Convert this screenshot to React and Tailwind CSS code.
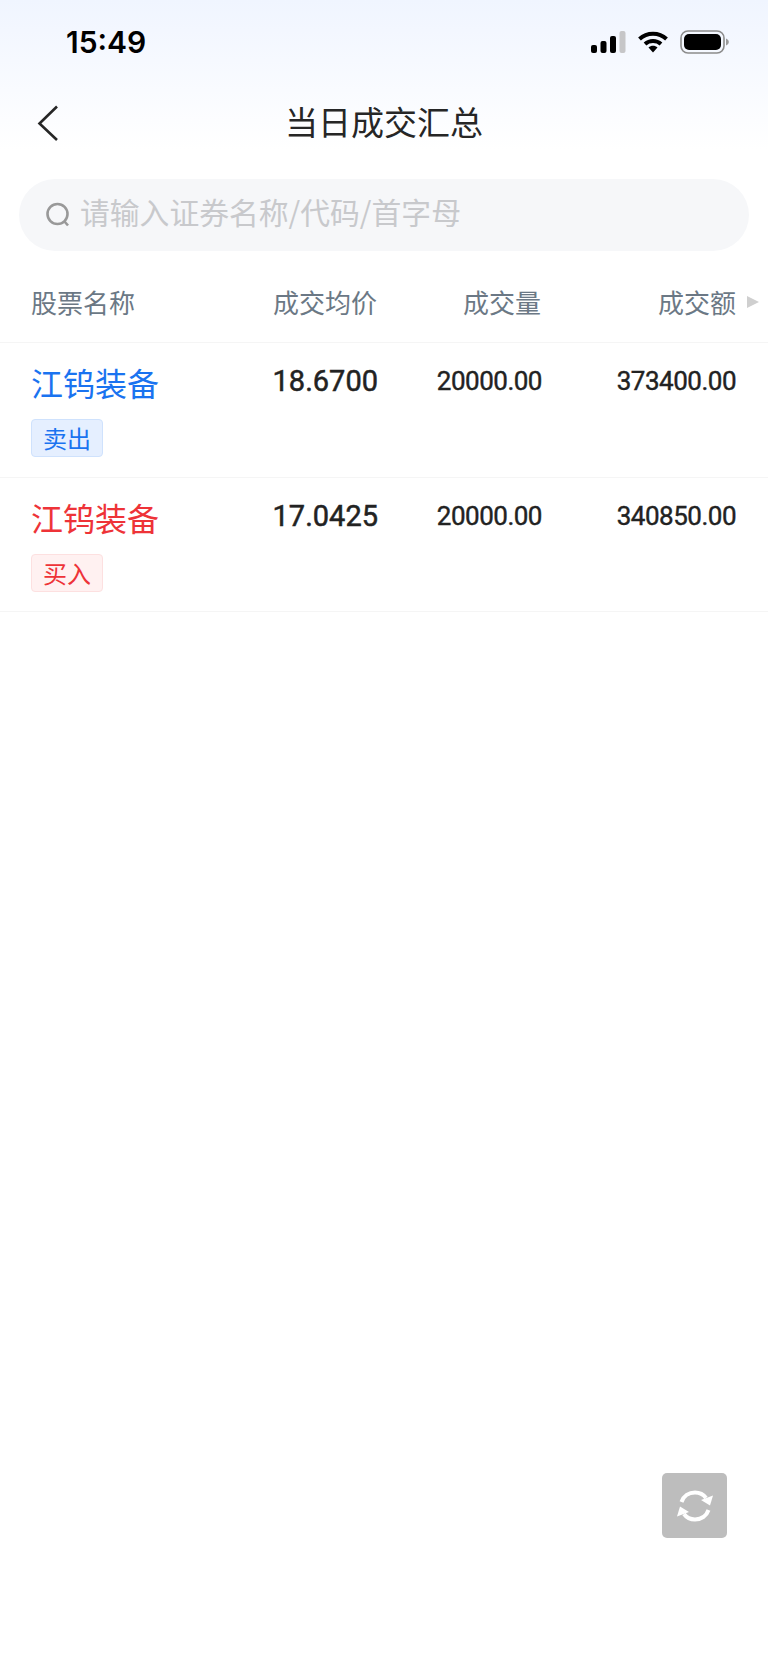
import React from "react";

const cjk = "font-['Noto_Sans_CJK_SC','Noto_Sans',sans-serif]";
const num = "font-['Roboto','Noto_Sans_CJK_SC',sans-serif]";

const rows = [
  { name: "江钨装备", side: "卖出", price: "18.6700", qty: "20000.00", amount: "373400.00", buy: false },
  { name: "江钨装备", side: "买入", price: "17.0425", qty: "20000.00", amount: "340850.00", buy: true },
];

function StatusBar() {
  return (
    <div className="h-[84px] flex items-center justify-between pl-[66px] pr-[39px]">
      <span className="font-['Inter',sans-serif] text-[30px] font-semibold text-black leading-none">15:49</span>
      <div className="flex items-center gap-[12px]">
        <svg width="35" height="22" viewBox="0 0 35 22">
          <rect x="0" y="14" width="6" height="8" rx="2" fill="#000" />
          <rect x="9.5" y="10" width="6" height="12" rx="2" fill="#000" />
          <rect x="19" y="5" width="6" height="17" rx="2" fill="#000" />
          <rect x="28.5" y="0" width="6" height="22" rx="2" fill="#c6c6c8" />
        </svg>
        <svg width="30" height="22" viewBox="0 0 30 22">
          <path d="M1.5 8C9 1 21 1 28.5 8" fill="none" stroke="#000" strokeWidth="4" />
          <path d="M7 13C11.5 9 18.5 9 23 13" fill="none" stroke="#000" strokeWidth="4" />
          <path d="M10.5 16.4C13 14.2 17 14.2 19.5 16.4L15 21.5Z" fill="#000" />
        </svg>
        <svg width="49" height="24" viewBox="0 0 49 24">
          <rect x="1" y="1" width="43" height="22" rx="7" fill="none" stroke="#8c8c8c" strokeWidth="1.6" />
          <rect x="4" y="4" width="37" height="16" rx="5" fill="#000" />
          <path d="M46 8.5C48 9.3 48.8 10.5 48.8 12S48 14.7 46 15.5Z" fill="#9a9a9a" />
        </svg>
      </div>
    </div>
  );
}

function TopBar() {
  return (
    <div className="relative h-[80px] flex items-center justify-center pb-[6px]">
      <svg className="absolute left-[36px] top-[20px]" width="24" height="38" viewBox="0 0 24 38">
        <path d="M21 2.5 3.5 19.5 21 36" fill="none" stroke="#262626" strokeWidth="2.6" />
      </svg>
      <h1 className={`${cjk} text-[33px] font-normal leading-none text-[#262626]`}>当日成交汇总</h1>
    </div>
  );
}

function SearchBox() {
  return (
    <div className="mx-[19px] mt-[15px] h-[72px] rounded-[36px] bg-[#f6f7f9] flex items-center pl-[26px]">
      <svg width="26" height="26" viewBox="0 0 26 26">
        <circle cx="12.5" cy="12" r="10" fill="none" stroke="#999999" strokeWidth="2.6" />
        <path d="M19.5 19.5 23 23.5" fill="none" stroke="#999999" strokeWidth="2.6" />
      </svg>
      <span className={`${cjk} ml-[9px] pb-[6px] text-[29.8px] leading-none text-[#c8c9cc]`}>请输入证券名称/代码/首字母</span>
    </div>
  );
}

function TableHeader() {
  return (
    <div className={`${cjk} flex items-center h-[92px] pl-[31px] pt-[10px] text-[26px] text-[#6b7885] border-b border-[#f5f5f5]`}>
      <div className="w-[200px]">股票名称</div>
      <div className="w-[146px] text-right">成交均价</div>
      <div className="w-[164px] text-right">成交量</div>
      <div className="w-[195px] text-right">成交额</div>
      <svg className="ml-[11px]" width="12" height="14" viewBox="0 0 12 14">
        <path d="M0 1 12 7 0 13Z" fill="#cfcfcf" />
      </svg>
    </div>
  );
}

function TableRow({ row }) {
  return (
    <div className="flex h-[134.5px] pl-[31px] border-b border-[#f5f5f5]">
      <div className="w-[200px] pt-[19px]">
        <div className={`${cjk} text-[32px] leading-[40px] ${row.buy ? "text-[#ee3338]" : "text-[#1a73f0]"}`}>{row.name}</div>
        <div
          className={`${cjk} mt-[17px] w-[72px] h-[38px] rounded-[4px] border flex items-center justify-center text-[24px] leading-none ${
            row.buy ? "bg-[#fff1f1] border-[#fde0e0] text-[#ee3338]" : "bg-[#e5efff] border-[#cfe2fd] text-[#1a73f0]"
          }`}
        >
          {row.side}
        </div>
      </div>
      <div className={`${num} w-[147px] pt-[18px] text-right text-[29px] leading-[40px] font-normal [-webkit-text-stroke:0.5px_#222222] text-[#222222]`}>{row.price}</div>
      <div className={`${num} w-[164px] pt-[18px] text-right text-[26px] leading-[40px] font-normal tracking-[-0.5px] [-webkit-text-stroke:0.4px_#222222] text-[#222222]`}>{row.qty}</div>
      <div className={`${num} w-[194px] pt-[18px] text-right text-[26px] leading-[40px] font-normal tracking-[-0.5px] [-webkit-text-stroke:0.4px_#222222] text-[#222222]`}>{row.amount}</div>
    </div>
  );
}

function RefreshButton() {
  return (
    <button className="absolute left-[662px] top-[1473px] w-[65px] h-[65px] rounded-[5px] bg-[#bdbdbd] flex items-center justify-center">
      <svg width="38" height="36" viewBox="0 0 38 36">
        <path d="M5.5 14C7.5 8 13 4.5 19 4.5c4.5 0 8.5 2 11 5.5" fill="none" stroke="#fff" strokeWidth="4" />
        <path d="M37 7.5 34 17.5 25 12Z" fill="#fff" />
        <path d="M32.5 22C30.5 28 25 31.5 19 31.5c-4.5 0-8.5-2-11-5.5" fill="none" stroke="#fff" strokeWidth="4" />
        <path d="M1 28.5 4 18.5 13 24Z" fill="#fff" />
      </svg>
    </button>
  );
}

export default function App() {
  return (
    <div className="relative w-[768px] h-[1663px] overflow-hidden bg-white">
      <div className="bg-gradient-to-b from-[#f0f5ff] to-white h-[150px] -mb-[150px]" />
      <StatusBar />
      <TopBar />
      <SearchBox />
      <TableHeader />
      {rows.map((row) => (
        <TableRow key={row.side} row={row} />
      ))}
      <RefreshButton />
    </div>
  );
}
